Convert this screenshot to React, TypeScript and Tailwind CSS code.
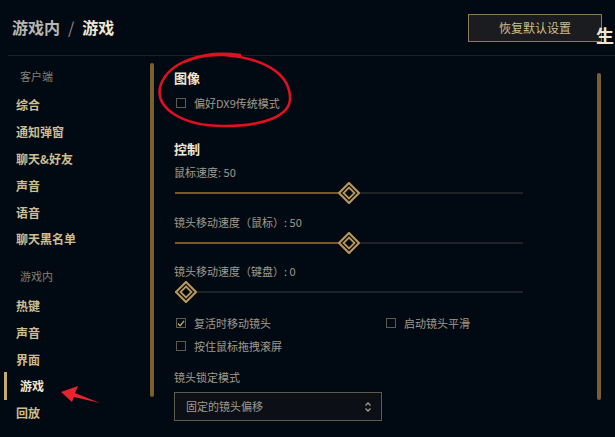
import React from "react";

const clientItems = ["综合", "通知弹窗", "聊天&好友", "声音", "语音", "聊天黑名单"];
const gameItems = ["热键", "声音", "界面", "游戏", "回放"];

function Thumb() {
  return (
    <svg width="22" height="22" viewBox="0 0 22 22">
      <polygon points="11,1 21,11 11,21 1,11" fill="#010a13" stroke="#b8955a" strokeWidth="2.2" />
      <polygon points="11,5.5 16.5,11 11,16.5 5.5,11" fill="none" stroke="#b8955a" strokeWidth="1.8" />
      <polygon points="11,9.2 12.8,11 11,12.8 9.2,11" fill="#010a13" />
    </svg>
  );
}

function Slider({ value }: { value: number }) {
  const pct = value / 100;
  return (
    <div className="relative h-[20px] w-[348px] ml-px">
      <div className="absolute left-0 right-0 top-[9px] h-[2px] bg-[#1e2328]" />
      <div
        className="absolute left-0 top-[9px] h-[2px] bg-[#785a28]"
        style={{ width: `${pct * 326 + 11}px` }}
      />
      <div className="absolute top-[-1px]" style={{ left: `${pct * 326}px` }}>
        <Thumb />
      </div>
    </div>
  );
}

function Check({ label, checked }: { label: string; checked?: boolean }) {
  return (
    <div className="flex items-center h-[16px]">
      <div className="ml-[2px] w-[10px] h-[10px] border border-[#5f5a4a] flex items-center justify-center">
        {checked && (
          <svg width="9" height="9" viewBox="0 0 9 9">
            <path d="M1 4.5 L3.5 7 L8 1.5" fill="none" stroke="#c8aa6e" strokeWidth="1.4" />
          </svg>
        )}
      </div>
      <span className="ml-[8px] text-[11px] text-[#a09b8c]">{label}</span>
    </div>
  );
}

export default function App() {
  return (
    <div
      className="relative w-[615px] h-[437px] overflow-hidden bg-[#010a13]"
      style={{ fontFamily: '"Noto Sans CJK SC", "Noto Sans", sans-serif' }}
    >
      {/* header */}
      <div className="h-[56px] flex items-start border-b border-[#1a2028] ml-[8px]">
        <div className="mt-[15px] ml-[4px] text-[16px] font-bold flex items-center gap-[8px]">
          <span className="text-[#b9b6ae]">游戏内</span>
          <span className="text-[#8f8d88] font-normal">/</span>
          <span className="text-[#f0e6d2]">游戏</span>
        </div>
        <div className="ml-auto mt-[14px] w-[134px] h-[28px] border border-[#8b7a55] bg-[#1a1c1f] flex items-center justify-center text-[12px] text-[#cdbe91]">
          恢复默认设置
        </div>
        <div className="ml-[-6px] mt-[25px] w-[19px] text-[18px] leading-[20px] font-bold text-[#f0e6d2] whitespace-nowrap">
          生
        </div>
      </div>

      <div className="flex">
        {/* sidebar */}
        <div className="w-[154px] shrink-0 flex">
          <div className="w-[150px] pt-[12px]">
            <div className="h-[16px] pl-[20px] text-[11px] leading-[16px] text-[#857f6f]">客户端</div>
            <div className="mt-[8px]">
              {clientItems.map((t) => (
                <div key={t} className="h-[26.8px] flex items-center pl-[16px] text-[12px] font-bold text-[#cdbe91]">
                  {t}
                </div>
              ))}
            </div>
            <div className="mt-[15.6px] h-[16px] pl-[20px] text-[11px] leading-[16px] text-[#857f6f]">游戏内</div>
            <div className="mt-[8.7px]">
              {gameItems.map((t) =>
                t === "游戏" ? (
                  <div key={t} className="h-[26.6px] flex items-center">
                    <div className="ml-[4px] w-[3px] h-[28px] bg-[#c8aa6e]" />
                    <span className="ml-[13px] text-[12px] font-bold text-[#f0e6d2]">{t}</span>
                  </div>
                ) : (
                  <div key={t} className="h-[26.6px] flex items-center pl-[16px] text-[12px] font-bold text-[#cdbe91]">
                    {t}
                  </div>
                )
              )}
            </div>
          </div>
          <div className="mt-[7px] w-[4px] h-[334px] bg-[#7a5f30] rounded-sm" />
        </div>

        {/* content */}
        <div className="flex-1 flex">
          <div className="w-[443px] pl-[20px] pt-[13px]">
            <div className="h-[18px] flex items-center text-[13px] font-bold text-[#f0e6d2]">图像</div>
            <div className="mt-[8px]">
              <Check label="偏好DX9传统模式" />
            </div>

            <div className="mt-[29px] h-[18px] flex items-center text-[13px] font-bold text-[#f0e6d2]">控制</div>
            <div className="mt-[6px] h-[16px] flex items-center text-[11px] text-[#a09b8c]">鼠标速度: 50</div>
            <div className="mt-[3px]">
              <Slider value={50} />
            </div>
            <div className="mt-[11px] h-[16px] flex items-center text-[11px] text-[#a09b8c]">镜头移动速度（鼠标）: 50</div>
            <div className="mt-[3px]">
              <Slider value={50} />
            </div>
            <div className="mt-[10px] h-[16px] flex items-center text-[11px] text-[#a09b8c]">镜头移动速度（键盘）: 0</div>
            <div className="mt-[3px]">
              <Slider value={0} />
            </div>

            <div className="mt-[13px] flex">
              <div className="w-[210px]">
                <Check label="复活时移动镜头" checked />
              </div>
              <Check label="启动镜头平滑" />
            </div>
            <div className="mt-[7px]">
              <Check label="按住鼠标拖拽滚屏" />
            </div>

            <div className="mt-[15px] h-[16px] flex items-center text-[11px] text-[#a09b8c]">镜头锁定模式</div>
            <div className="mt-[7px] w-[208px] h-[29px] border border-[#5e5a4c] bg-[#0c1016] flex items-center pl-[11px] pr-[9px]">
              <span className="text-[11px] text-[#a09b8c]">固定的镜头偏移</span>
              <svg className="ml-auto" width="8" height="12" viewBox="0 0 8 12">
                <path d="M1.5 4.5 L4 2 L6.5 4.5 M1.5 7.5 L4 10 L6.5 7.5" fill="none" stroke="#a09b8c" strokeWidth="1.4" />
              </svg>
            </div>
          </div>
          <div className="mt-[17px] w-[4px] h-[327px] bg-[#7a5f30] rounded-sm" />
        </div>
      </div>

      {/* red annotations */}
      <svg className="absolute left-0 top-0 pointer-events-none" width="615" height="437" viewBox="0 0 615 437">
        <path
          d="M240 55 C202 50 170 62 161 84 C153 108 182 126 224 126 C264 126 292 116 290 96 C288 72 262 58 224 55 C207 54 192 58 184 62"
          fill="none"
          stroke="#e0101e"
          strokeWidth="2.6"
          strokeLinecap="round"
        />
        <polygon points="61,392 78,386 75,393 100,403 74,397 72,402" fill="#e8232d" />
      </svg>
    </div>
  );
}
